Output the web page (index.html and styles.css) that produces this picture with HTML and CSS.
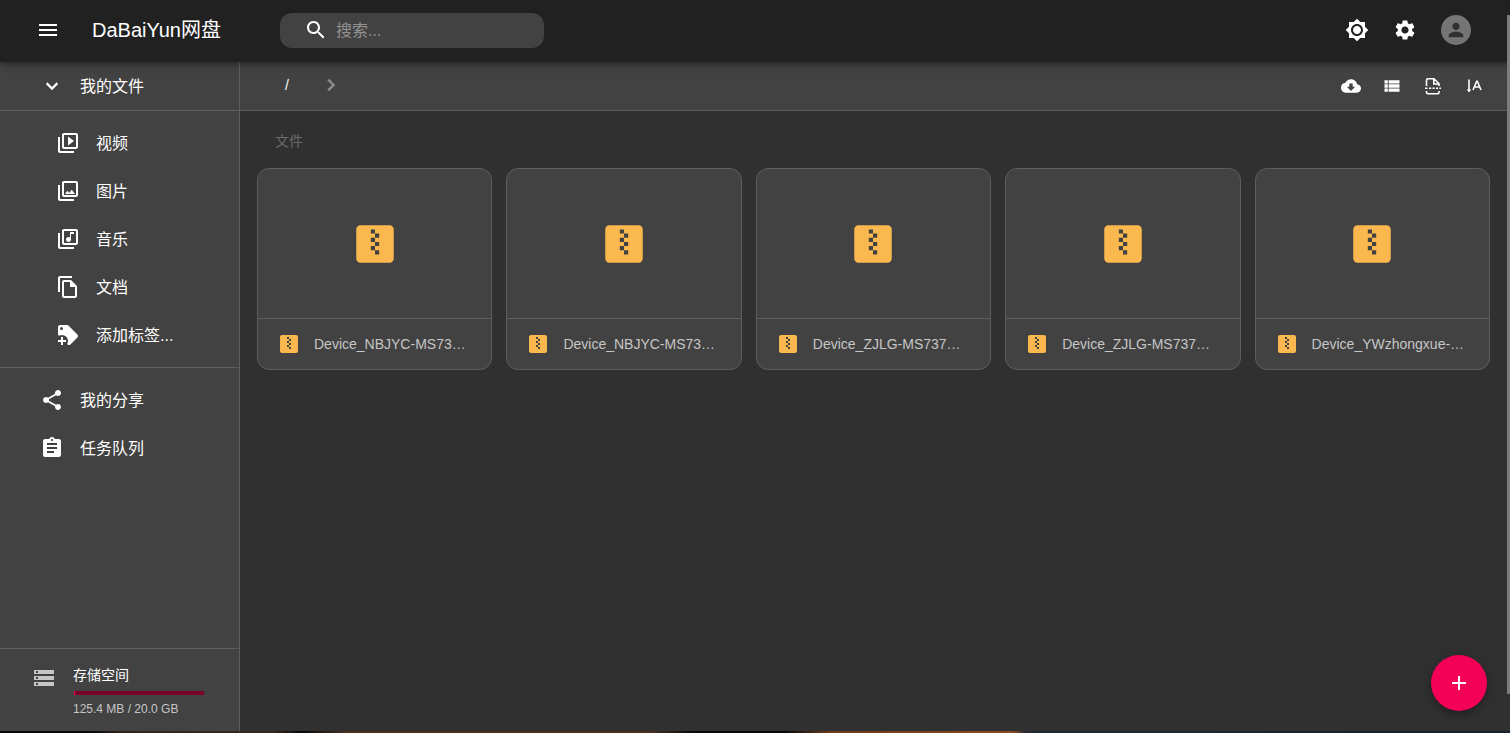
FILE: index.html
```html
<!DOCTYPE html>
<html lang="zh-CN">
<head>
<meta charset="utf-8">
<title>DaBaiYun网盘</title>
<link rel="stylesheet" href="styles.css">
</head>
<body>
<svg class="defs" aria-hidden="true">
  <symbol id="zip" viewBox="0 0 24 24"><path d="M14 17h-2v-2h-2v-2h2v2h2v2m0-8h-2v2h2v2h-2v-2h-2V9h2V7h-2V5h2v2h2v2m5-6H5a2 2 0 0 0-2 2v14a2 2 0 0 0 2 2h14a2 2 0 0 0 2-2V5a2 2 0 0 0-2-2z"/></symbol>
</svg>
<header class="appbar">
  <button class="icon-btn" aria-label="菜单"><svg class="icon" viewBox="0 0 24 24"><path d="M3 18h18v-2H3v2zm0-5h18v-2H3v2zm0-7v2h18V6H3z"/></svg></button>
  <h1 class="brand">DaBaiYun网盘</h1>
  <label class="search">
    <svg class="icon" viewBox="0 0 24 24"><path d="M15.5 14h-.79l-.28-.27C15.41 12.59 16 11.11 16 9.5 16 5.91 13.09 3 9.5 3S3 5.91 3 9.5 5.91 16 9.5 16c1.61 0 3.09-.59 4.23-1.57l.27.28v.79l5 4.99L20.49 19l-4.99-5zm-6 0C7.01 14 5 11.99 5 9.5S7.01 5 9.5 5 14 7.01 14 9.5 11.99 14 9.5 14z"/></svg>
    <input class="search-input" type="text" placeholder="搜索..." aria-label="搜索">
  </label>
  <div class="appbar-actions">
    <button class="icon-btn" aria-label="切换主题"><svg class="icon" viewBox="0 0 24 24"><path d="M20 8.69V4h-4.69L12 .69 8.69 4H4v4.69L.69 12 4 15.31V20h4.69L12 23.31 15.31 20H20v-4.69L23.31 12 20 8.69zM12 18c-3.31 0-6-2.69-6-6s2.69-6 6-6 6 2.69 6 6-2.69 6-6 6zm0-10c-2.21 0-4 1.79-4 4s1.79 4 4 4 4-1.79 4-4-1.79-4-4-4z"/></svg></button>
    <button class="icon-btn" aria-label="设置"><svg class="icon" viewBox="0 0 24 24"><path d="M19.14 12.94c.04-.3.06-.61.06-.94 0-.32-.02-.64-.07-.94l2.03-1.58c.18-.14.23-.41.12-.61l-1.92-3.32c-.12-.22-.37-.29-.59-.22l-2.39.96c-.5-.38-1.03-.7-1.62-.94l-.36-2.54c-.04-.24-.24-.41-.48-.41h-3.84c-.24 0-.43.17-.47.41l-.36 2.54c-.59.24-1.13.57-1.62.94l-2.39-.96c-.22-.08-.47 0-.59.22L2.74 8.87c-.12.21-.08.47.12.61l2.03 1.58c-.05.3-.09.63-.09.94s.02.64.07.94l-2.03 1.58c-.18.14-.23.41-.12.61l1.92 3.32c.12.22.37.29.59.22l2.39-.96c.5.38 1.03.7 1.62.94l.36 2.54c.05.24.24.41.48.41h3.84c.24 0 .44-.17.47-.41l.36-2.54c.59-.24 1.13-.56 1.62-.94l2.39.96c.22.08.47 0 .59-.22l1.92-3.32c.12-.22.07-.47-.12-.61l-2.01-1.58zM12 15.6c-1.98 0-3.6-1.62-3.6-3.6s1.62-3.6 3.6-3.6 3.6 1.62 3.6 3.6-1.62 3.6-3.6 3.6z"/></svg></button>
    <button class="avatar" aria-label="账户"><svg class="icon" viewBox="0 0 24 24"><path d="M12 12c2.21 0 4-1.79 4-4s-1.79-4-4-4-4 1.79-4 4 1.79 4 4 4zm0 2c-2.67 0-8 1.34-8 4v2h16v-2c0-2.66-5.33-4-8-4z"/></svg></button>
  </div>
</header>
<div class="shell">
  <nav class="sidebar">
    <a class="nav-item nav-head" href="#"><svg class="icon icon-bold" viewBox="0 0 24 24"><path d="M16.59 8.59 12 13.17 7.41 8.59 6 10l6 6 6-6z"/></svg>我的文件</a>
    <div class="nav-group nav-tags">
      <a class="nav-item nav-sub" href="#"><svg class="icon" viewBox="0 0 24 24"><path d="M4 6H2v14c0 1.1.9 2 2 2h14v-2H4V6zm16-4H8c-1.1 0-2 .9-2 2v12c0 1.1.9 2 2 2h12c1.1 0 2-.9 2-2V4c0-1.1-.9-2-2-2zm0 14H8V4h12v12zM12 5.5v9l6-4.5z"/></svg>视频</a>
      <a class="nav-item nav-sub" href="#"><svg class="icon" viewBox="0 0 24 24"><path d="M20 4v12H8V4h12m0-2H8c-1.1 0-2 .9-2 2v12c0 1.1.9 2 2 2h12c1.1 0 2-.9 2-2V4c0-1.1-.9-2-2-2zm-8.5 9.67 1.69 2.26 2.48-3.1L19 15H9zM2 6v14c0 1.1.9 2 2 2h14v-2H4V6H2z"/></svg>图片</a>
      <a class="nav-item nav-sub" href="#"><svg class="icon" viewBox="0 0 24 24"><path d="M20 2H8c-1.1 0-2 .9-2 2v12c0 1.1.9 2 2 2h12c1.1 0 2-.9 2-2V4c0-1.1-.9-2-2-2zm0 14H8V4h12v12zm-7.5-1c1.38 0 2.5-1.12 2.5-2.5V7h3V5h-4v5.51c-.42-.32-.93-.51-1.5-.51-1.38 0-2.5 1.12-2.5 2.5s1.12 2.5 2.5 2.5zM4 6H2v14c0 1.1.9 2 2 2h14v-2H4V6z"/></svg>音乐</a>
      <a class="nav-item nav-sub" href="#"><svg class="icon" viewBox="0 0 24 24"><path d="M16 1H4c-1.1 0-2 .9-2 2v14h2V3h12V1zm-1 4H8c-1.1 0-1.99.9-1.99 2L6 21c0 1.1.89 2 1.99 2H19c1.1 0 2-.9 2-2V11l-6-6zM8 21V7h6v5h5v9H8z"/></svg>文档</a>
      <a class="nav-item nav-sub" href="#"><svg class="icon" viewBox="0 0 24 24"><path d="M21.41 11.58l-9-9C12.04 2.21 11.53 2 11 2H4a2 2 0 0 0-2 2v7c0 .53.21 1.04.59 1.41l.41.4c.9-.54 1.94-.81 3-.81a6 6 0 0 1 6 6c0 1.06-.28 2.09-.82 3l.4.4c.37.38.89.6 1.42.6s1.04-.21 1.41-.59l7-7c.38-.37.59-.88.59-1.41s-.21-1.04-.59-1.42M5.5 7A1.5 1.5 0 1 1 5.5 4 1.5 1.5 0 0 1 5.5 7M10 19H7v3H5v-3H2v-2h3v-3h2v3h3v2z"/></svg>添加标签...</a>
    </div>
    <div class="nav-group">
      <a class="nav-item" href="#"><svg class="icon" viewBox="0 0 24 24"><path d="M18 16.08c-.76 0-1.44.3-1.96.77L8.91 12.7c.05-.23.09-.46.09-.7s-.04-.47-.09-.7l7.05-4.11c.54.5 1.25.81 2.04.81 1.66 0 3-1.34 3-3s-1.34-3-3-3-3 1.34-3 3c0 .24.04.47.09.7L8.04 9.81C7.5 9.31 6.79 9 6 9c-1.66 0-3 1.34-3 3s1.34 3 3 3c.79 0 1.5-.31 2.04-.81l7.12 4.16c-.05.21-.08.43-.08.65 0 1.61 1.31 2.92 2.92 2.92s2.92-1.31 2.92-2.92-1.31-2.92-2.92-2.92z"/></svg>我的分享</a>
      <a class="nav-item" href="#"><svg class="icon" viewBox="0 0 24 24"><path d="M19 3h-4.18C14.4 1.84 13.3 1 12 1c-1.3 0-2.4.84-2.82 2H5c-1.1 0-2 .9-2 2v14c0 1.1.9 2 2 2h14c1.1 0 2-.9 2-2V5c0-1.1-.9-2-2-2zm-7 0c.55 0 1 .45 1 1s-.45 1-1 1-1-.45-1-1 .45-1 1-1zm2 14H7v-2h7v2zm3-4H7v-2h10v2zm0-4H7V7h10v2z"/></svg>任务队列</a>
    </div>
    <div class="storage">
      <svg class="icon storage-icon" viewBox="0 0 24 24"><path d="M2 20h20v-4H2v4zm2-3h2v2H4v-2zM2 4v4h20V4H2zm4 3H4V5h2v2zm-4 7h20v-4H2v4zm2-3h2v2H4v-2z"/></svg>
      <div class="storage-info">
        <span class="storage-title">存储空间</span>
        <div class="bar" role="progressbar" aria-label="存储空间" aria-valuenow="1"><div class="bar-fill" style="width:0.6%"></div></div>
        <span class="storage-text">125.4 MB / 20.0 GB</span>
      </div>
    </div>
  </nav>
  <main class="content">
    <div class="toolbar">
      <div class="crumbs">
        <button class="crumb">/</button>
        <svg class="icon icon-bold crumb-sep" viewBox="0 0 24 24"><path d="M10 6 8.59 7.41 13.17 12l-4.58 4.59L10 18l6-6z"/></svg>
      </div>
      <div class="tools">
        <button class="icon-btn" aria-label="离线下载"><svg class="icon icon-small" viewBox="0 0 24 24"><path d="M19.35 10.04C18.67 6.59 15.64 4 12 4 9.11 4 6.6 5.64 5.35 8.04 2.34 8.36 0 10.91 0 14c0 3.31 2.69 6 6 6h13c2.76 0 5-2.24 5-5 0-2.64-2.05-4.78-4.65-4.96zM17 13l-5 5-5-5h3V9h4v4h3z"/></svg></button>
        <button class="icon-btn" aria-label="列表"><svg class="icon icon-small" viewBox="0 0 24 24"><path d="M3 14h4v-4H3v4zm0 5h4v-4H3v4zM3 9h4V5H3v4zm5 5h13v-4H8v4zm0 5h13v-4H8v4zM8 5v4h13V5H8z"/></svg></button>
        <button class="icon-btn" aria-label="分页"><svg class="icon icon-small icon-line" viewBox="0 0 20 20"><path d="M3.5 10V4a1.2 1.2 0 0 1 1.200-1.200H11l5 5V10M10.800 3v5H16M3.500 15v1.500a1.200 1.200 0 0 0 1.200 1.200h10.100a1.200 1.200 0 0 0 1.200-1.200V15M2 12.300h2.500M6 12.300h2.200M9.500 12.300h2.200M13 12.300h2M16.300 12.300h1.700"/></svg></button>
        <button class="icon-btn" aria-label="排序"><svg class="icon icon-small icon-line" viewBox="0 0 20 20"><path d="M5 3.500V15M9 14 12.700 5.300h.6L17 14M10.300 11h5.400"/><path class="solid" d="M2.700 13.500h4.600L5 16.500z"/></svg></button>
      </div>
    </div>
    <section class="files">
      <h2 class="files-title">文件</h2>
      <div class="grid">
        <article class="card"><div class="preview"><svg class="zip-large"><use href="#zip"/></svg></div><div class="caption"><svg class="zip-small"><use href="#zip"/></svg><span class="name">Device_NBJYC-MS73…</span></div></article>
        <article class="card"><div class="preview"><svg class="zip-large"><use href="#zip"/></svg></div><div class="caption"><svg class="zip-small"><use href="#zip"/></svg><span class="name">Device_NBJYC-MS73…</span></div></article>
        <article class="card"><div class="preview"><svg class="zip-large"><use href="#zip"/></svg></div><div class="caption"><svg class="zip-small"><use href="#zip"/></svg><span class="name">Device_ZJLG-MS737…</span></div></article>
        <article class="card"><div class="preview"><svg class="zip-large"><use href="#zip"/></svg></div><div class="caption"><svg class="zip-small"><use href="#zip"/></svg><span class="name">Device_ZJLG-MS737…</span></div></article>
        <article class="card"><div class="preview"><svg class="zip-large"><use href="#zip"/></svg></div><div class="caption"><svg class="zip-small"><use href="#zip"/></svg><span class="name">Device_YWzhongxue-…</span></div></article>
      </div>
    </section>
  </main>
</div>
<div class="edge"></div>
<div class="scroll-thumb"></div>
<button class="fab" aria-label="新建"><svg class="icon" viewBox="0 0 24 24"><path d="M19 13h-6v6h-2v-6H5v-2h6V5h2v6h6v2z"/></svg></button>
</body>
</html>
```
FILE: styles.css
```css
* {
  box-sizing: border-box;
}

body {
  margin: 0;
  height: 100vh;
  display: flex;
  flex-direction: column;
  overflow: hidden;
  background: #303030;
  color: #fff;
  font-family: "Liberation Sans", "Noto Sans CJK SC", sans-serif;
  font-size: 16px;
}

button {
  border: 0;
  padding: 0;
  background: none;
  color: inherit;
  font: inherit;
}

a {
  color: inherit;
  text-decoration: none;
}

.defs {
  position: absolute;
  width: 0;
  height: 0;
}

.icon {
  display: block;
  flex: none;
  width: 24px;
  height: 24px;
  fill: currentColor;
}

.icon-small {
  width: 20px;
  height: 20px;
}

.icon-bold {
  stroke: currentColor;
  stroke-width: 0.4;
}

.icon-line {
  fill: none;
  stroke: currentColor;
  stroke-width: 1.6;
}

.solid {
  fill: currentColor;
  stroke: none;
}

.icon-btn {
  display: flex;
}

/* Top bar */
.appbar {
  position: relative;
  z-index: 2;
  flex: none;
  display: flex;
  align-items: center;
  height: 62px;
  padding: 0 39px 2px 36px;
  background: #212121;
  box-shadow: 0 2px 4px -1px rgba(0, 0, 0, 0.2), 0 4px 5px rgba(0, 0, 0, 0.14), 0 1px 10px rgba(0, 0, 0, 0.12);
}

.brand {
  width: 188px;
  margin: 0 0 0 32px;
  font-size: 20px;
  font-weight: 400;
  line-height: 32px;
  white-space: nowrap;
}

.search {
  display: flex;
  align-items: center;
  gap: 8px;
  width: 264px;
  height: 35px;
  padding: 0 24px;
  border-radius: 12px;
  background: #424242;
}

.search-input {
  flex: 1;
  min-width: 0;
  border: 0;
  padding: 2px 0 0;
  outline: 0;
  background: none;
  color: #fff;
  font: inherit;
}

.search-input::placeholder {
  color: #929292;
}

.appbar-actions {
  display: flex;
  align-items: center;
  gap: 24px;
  margin-left: auto;
}

.avatar {
  display: flex;
  align-items: center;
  justify-content: center;
  width: 30px;
  height: 30px;
  border-radius: 50%;
  background: #757575;
  color: #303030;
}

.avatar .icon {
  width: 22px;
  height: 22px;
}

/* Sidebar */
.shell {
  flex: 1;
  min-height: 0;
  display: flex;
}

.sidebar {
  flex: none;
  display: flex;
  flex-direction: column;
  width: 240px;
  border-right: 1px solid #5e5e5e;
  background: #424242;
}

.nav-item {
  display: flex;
  align-items: center;
  gap: 16px;
  height: 48px;
  padding: 0 0 2px 40px;
}

.nav-item .icon {
  margin-top: 2px;
}

.nav-head {
  flex: none;
  height: 49px;
  border-bottom: 1px solid #5e5e5e;
}

.nav-sub {
  padding-left: 56px;
}

.nav-group {
  padding: 8px 0;
}

.nav-tags {
  border-bottom: 1px solid #5e5e5e;
}

.storage {
  display: flex;
  gap: 17px;
  margin-top: auto;
  padding: 16px 35px 12px 32px;
  border-top: 1px solid #5e5e5e;
}

.storage-icon {
  margin-top: 1px;
  color: #c6c6c6;
}

.storage-info {
  flex: 1;
  display: flex;
  flex-direction: column;
}

.storage-title {
  font-size: 14px;
  line-height: 20px;
}

.bar {
  height: 4px;
  margin: 6px 0 4px 1px;
  background: #7a0028;
}

.bar-fill {
  height: 100%;
  background: #f50057;
}

.storage-text {
  color: #c6c6c6;
  font-size: 12px;
  line-height: 20px;
}

/* Content */
.content {
  flex: 1;
  min-width: 0;
}

.toolbar {
  display: flex;
  align-items: center;
  justify-content: space-between;
  height: 49px;
  padding: 0 26px 0 45px;
  border-bottom: 1px solid #5e5e5e;
  background: #424242;
}

.crumbs {
  display: flex;
  align-items: center;
  gap: 30px;
  padding-bottom: 2px;
  font-size: 14px;
}

.crumb-sep {
  color: #8e8e8e;
}

.tools {
  display: flex;
  gap: 21px;
}

.files {
  padding: 20px 20px 20px 17px;
}

.files-title {
  margin: 0;
  padding: 0 18px 17px;
  color: #6b6b6b;
  font-size: 14px;
  font-weight: 400;
  line-height: 20px;
}

.grid {
  display: grid;
  grid-template-columns: repeat(5, 1fr);
  gap: 14px;
}

.card {
  min-width: 0;
  overflow: hidden;
  border: 1px solid #5e5e5e;
  border-radius: 12px;
  background: #424242;
}

.preview {
  display: flex;
  align-items: center;
  justify-content: center;
  height: 150px;
  border-bottom: 1px solid #5e5e5e;
}

.zip-large {
  width: 50px;
  height: 50px;
  fill: #fbb84f;
}

.zip-small {
  flex: none;
  width: 24px;
  height: 24px;
  fill: #fbb84f;
}

.caption {
  display: flex;
  align-items: center;
  gap: 13px;
  height: 50px;
  padding: 0 19px;
}

.name {
  overflow: hidden;
  color: #c6c6c6;
  font-size: 14px;
  line-height: 20px;
  text-overflow: ellipsis;
  white-space: nowrap;
}

/* Window edge, scroll thumb and action button */
.edge {
  flex: none;
  height: 2px;
  background: linear-gradient(90deg, #080808 0, #080808 6%, #30231d 8%, #38271e 18%, #080808 20%, #49301f 23%, #49301f 43%, #080808 46%, #080808 52%, #6d3a19 55%, #8b4a20 67%, #202830 68%, #17202a 100%);
}

.scroll-thumb {
  position: fixed;
  z-index: 3;
  top: 15px;
  right: 0;
  bottom: 39px;
  width: 3px;
  background: #7c7c7c;
}

.fab {
  position: fixed;
  right: 23px;
  bottom: 22px;
  display: flex;
  align-items: center;
  justify-content: center;
  width: 56px;
  height: 56px;
  border-radius: 50%;
  background: #f50057;
  box-shadow: 0 3px 5px -1px rgba(0, 0, 0, 0.2), 0 6px 10px rgba(0, 0, 0, 0.14), 0 1px 18px rgba(0, 0, 0, 0.12);
}
```
